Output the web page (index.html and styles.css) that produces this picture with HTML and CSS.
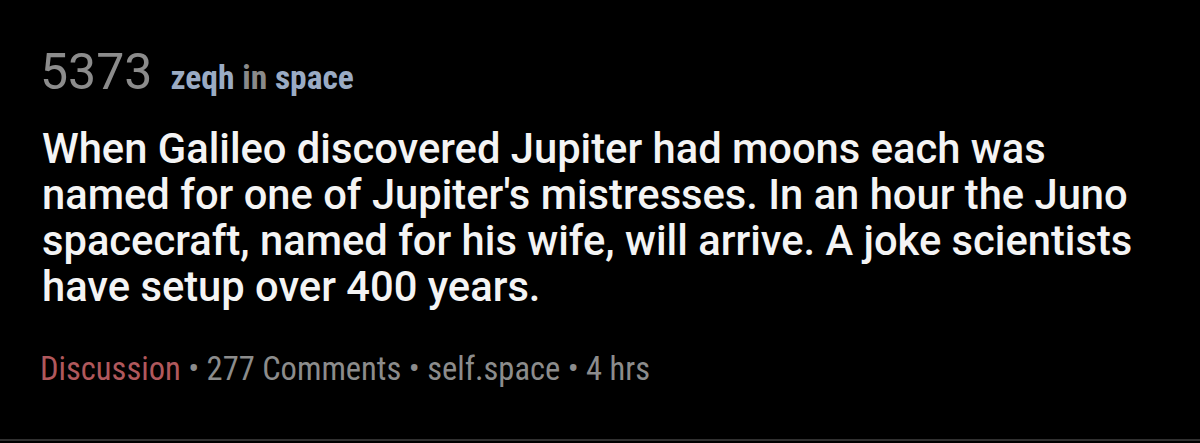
FILE: index.html
```html
<!DOCTYPE html>
<html>
<head>
<meta charset="utf-8">
<link rel="stylesheet" href="styles.css">
</head>
<body>
<div class="post">
  <div class="head">
    <span class="score">5373</span>
    <span class="byline"><span class="user">zeqh</span> <span class="in">in</span> <span class="sub">space</span></span>
  </div>
  <h1 class="title">When Galileo discovered Jupiter had moons each was named for one of Jupiter's mistresses. In an hour the Juno spacecraft, named for his wife, will arrive. A joke scientists have setup over 400 years.</h1>
  <div class="meta"><span class="flair">Discussion</span> • 277 Comments • self.space • 4 hrs</div>
</div>
</body>
</html>
```
FILE: styles.css
```css
html, body {
  margin: 0;
  padding: 0;
  background: #000;
  width: 1200px;
  height: 443px;
  overflow: hidden;
}
.post {
  box-sizing: border-box;
  height: 441px;
  padding: 42px 40px 0 40px;
  border-bottom: 2px solid #303030;
  font-family: Roboto, "Noto Sans", sans-serif;
}
.head {
  display: flex;
  align-items: baseline;
  gap: 18px;
  height: 60px;
}
.score {
  font-size: 50px;
  color: #8c8c8c;
  font-weight: 400;
  line-height: 60px;
}
.byline {
  font-size: 33.5px;
  font-weight: 700;
  font-stretch: condensed;
  color: #9aabc4;
}
.byline .in {
  color: #8a8a8a;
}
.title {
  margin: 24px 0 0 2px;
  font-size: 41.7px;
  font-weight: 500;
  line-height: 46px;
  color: #f4f4f4;
}
.meta {
  margin-top: 39px;
  font-size: 32.5px;
  line-height: 40px;
  font-stretch: condensed;
  color: #8c8c8c;
}
.flair {
  color: #b0585c;
}
```
